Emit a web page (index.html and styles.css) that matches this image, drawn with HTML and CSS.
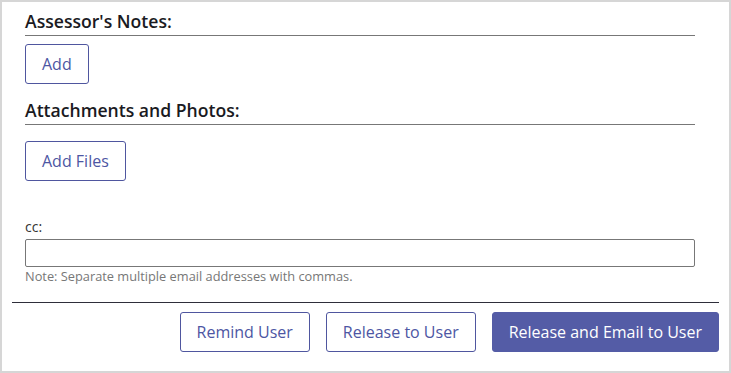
FILE: index.html
```html
<!DOCTYPE html>
<html lang="en">
<head>
  <meta charset="UTF-8" />
  <meta name="viewport" content="width=device-width, initial-scale=1.0"/>
  <title>Assessment Release</title>
  <link rel="stylesheet" href="styles.css">
</head>
<body>

  <div class="panel">
    <div class="panel-body">
      <h2 class="section-title">Assessor's Notes:</h2>
      <button class="btn btn-outline notes-btn">Add</button>

      <h2 class="section-title attach-title">Attachments and Photos:</h2>
      <button class="btn btn-outline files-btn">Add Files</button>

      <label class="cc-label" for="ccInput">cc:</label>
      <input type="text" class="cc-input" id="ccInput" />
      <div class="cc-note">Note: Separate multiple email addresses with commas.</div>
    </div>

    <div class="panel-footer">
      <button class="btn btn-outline">Remind User</button>
      <button class="btn btn-outline">Release to User</button>
      <button class="btn btn-primary">Release and Email to User</button>
    </div>
  </div>

</body>
</html>
```

FILE: styles.css
```css
body {
  margin: 0;
  font-family: "Open Sans", "Noto Sans", Arial, sans-serif;
  background: #fff;
  color: #222;
}

.panel {
  width: 731px;
  height: 373px;
  box-sizing: border-box;
  border: 2px solid #d6d6d6;
  background: #fff;
}

.panel-body {
  padding: 7px 34px 0 23px;
  display: flex;
  flex-direction: column;
  align-items: flex-start;
}

.section-title {
  align-self: stretch;
  margin: 0;
  font-size: 17.6px;
  font-weight: 600;
  line-height: 24px;
  padding-bottom: 2px;
  border-bottom: 1px solid #777;
  color: #1a1a22;
}
.attach-title {
  margin-top: 14px;
}

.btn {
  height: 40px;
  padding: 0 16px;
  font-family: inherit;
  font-size: 16px;
  border-radius: 3px;
  cursor: pointer;
  box-sizing: border-box;
}
.btn-outline {
  background: #fff;
  color: #4d56a3;
  border: 1px solid #4f569f;
}
.btn-primary {
  background: #545ca6;
  color: #fff;
  border: 1px solid #545ca6;
}

.notes-btn {
  margin-top: 8px;
}
.files-btn {
  margin-top: 16px;
}

.cc-label {
  margin-top: 36px;
  font-size: 14px;
  line-height: 19px;
  color: #333;
}
.cc-input {
  align-self: stretch;
  margin: 3px 0 0;
  height: 28px;
  box-sizing: border-box;
  border: 1px solid #777;
  border-radius: 2px;
  padding: 0 6px;
  font-family: inherit;
  font-size: 14px;
}
.cc-note {
  margin-top: 0;
  font-size: 12.8px;
  line-height: 18px;
  color: #777;
}

.panel-footer {
  margin: 17px 10px 0;
  padding-top: 9px;
  border-top: 1px solid #2e2e3a;
  display: flex;
  justify-content: flex-end;
  gap: 16px;
}
```
